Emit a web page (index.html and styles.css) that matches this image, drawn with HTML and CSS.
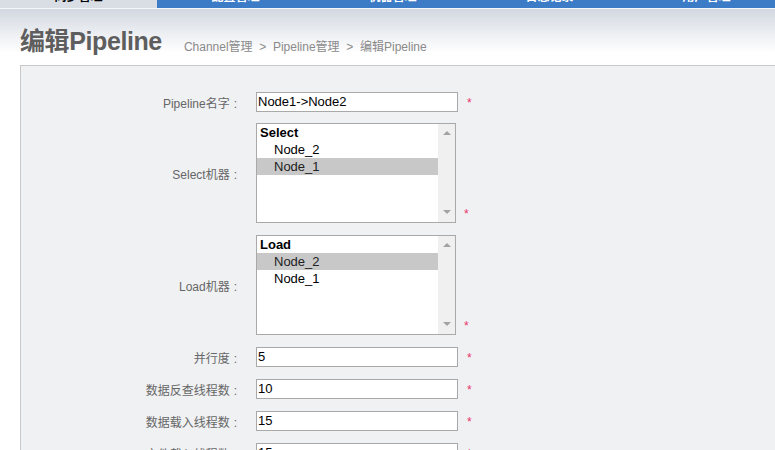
FILE: index.html
```html
<!DOCTYPE html>
<html lang="zh-CN">
<head>
<meta charset="utf-8">
<title>编辑Pipeline</title>
<link rel="stylesheet" href="styles.css">
</head>
<body>
<div class="topnav">
  <div class="tab active"><span>同步管理</span></div>
  <div class="tab"><span>配置管理</span></div>
  <div class="tab"><span>机器管理</span></div>
  <div class="tab"><span>日志记录</span></div>
  <div class="tab"><span>用户管理</span></div>
</div>
<div class="header">
  <h1 class="title">编辑Pipeline</h1>
  <div class="crumbs">Channel管理&nbsp; &gt; &nbsp;Pipeline管理&nbsp; &gt; &nbsp;编辑Pipeline</div>
</div>
<div class="panel">
  <div class="row first">
    <div class="label">Pipeline名字<span class="colon">:</span></div>
    <div class="field"><div class="input">Node1-&gt;Node2</div></div>
    <span class="star">*</span>
  </div>
  <div class="row">
    <div class="label">Select机器<span class="colon">:</span></div>
    <div class="field">
      <div class="listbox">
        <div class="opts">
          <div class="group">Select</div>
          <div class="opt">Node_2</div>
          <div class="opt sel">Node_1</div>
        </div>
        <div class="scroll"><span class="up"></span><span class="down"></span></div>
      </div>
    </div>
    <span class="star bottom">*</span>
  </div>
  <div class="row">
    <div class="label">Load机器<span class="colon">:</span></div>
    <div class="field">
      <div class="listbox">
        <div class="opts">
          <div class="group">Load</div>
          <div class="opt sel">Node_2</div>
          <div class="opt">Node_1</div>
        </div>
        <div class="scroll"><span class="up"></span><span class="down"></span></div>
      </div>
    </div>
    <span class="star bottom">*</span>
  </div>
  <div class="row">
    <div class="label">并行度<span class="colon">:</span></div>
    <div class="field"><div class="input">5</div></div>
    <span class="star">*</span>
  </div>
  <div class="row">
    <div class="label">数据反查线程数<span class="colon">:</span></div>
    <div class="field"><div class="input">10</div></div>
    <span class="star">*</span>
  </div>
  <div class="row">
    <div class="label">数据载入线程数<span class="colon">:</span></div>
    <div class="field"><div class="input">15</div></div>
    <span class="star">*</span>
  </div>
  <div class="row">
    <div class="label">文件载入线程数<span class="colon">:</span></div>
    <div class="field"><div class="input">15</div></div>
    <span class="star">*</span>
  </div>
</div>
</body>
</html>
```
FILE: styles.css
```css
html, body {
  margin: 0;
  padding: 0;
  background: #fff;
  font-family: "Liberation Sans", "Noto Sans CJK SC", sans-serif;
  overflow: hidden;
}
.topnav {
  display: flex;
  height: 8px;
  overflow: hidden;
  background: #3c7bc6;
}
.tab {
  flex: 0 0 157px;
  height: 8px;
  overflow: hidden;
  color: #fff;
  font-size: 12px;
  font-weight: bold;
  text-align: center;
}
.tab span {
  display: block;
  margin-top: -11px;
  line-height: 16px;
}
.tab.active {
  background: #d9dde4;
  color: #000;
}
.header {
  height: 56px;
  border-top: 1px solid #f4f6f9;
  background: linear-gradient(#d2d8e0 0%, #f3f4f7 55%, #ffffff 78%, #ffffff 100%);
  display: flex;
  align-items: flex-end;
  padding-left: 20px;
}
.title {
  margin: 0 0 9px 0;
  font-size: 25px;
  line-height: 30px;
  font-weight: bold;
  color: #5e5e5e;
  letter-spacing: -0.4px;
}
.crumbs {
  margin: 0 0 10px 22px;
  font-size: 12px;
  line-height: 16px;
  color: #8a8a8a;
}
.panel {
  margin-left: 20px;
  border-top: 1px solid #c9c9c9;
  border-left: 1px solid #c9c9c9;
  background: #f0f1f3;
  padding-top: 26px;
  height: 400px;
}
.row {
  display: flex;
  align-items: center;
  margin-bottom: 12px;
}
.row.first {
  margin-bottom: 11px;
}
.label {
  box-sizing: border-box;
  width: 219px;
  padding-right: 3px;
  text-align: right;
  font-size: 12px;
  color: #666;
  white-space: nowrap;
}
.colon {
  margin-left: 4px;
}
.field {
  margin-left: 16px;
}
.input {
  box-sizing: border-box;
  width: 202px;
  height: 20px;
  border: 1px solid #a9a9a9;
  background: #fff;
  padding: 0 1px;
  font-size: 13px;
  line-height: 18px;
  color: #000;
}
.star {
  margin-left: 9px;
  color: #ea336b;
  font-size: 12px;
  line-height: 12px;
  padding-top: 2px;
}
.star.bottom {
  align-self: flex-end;
  margin-left: 8px;
  margin-bottom: 3px;
}
.listbox {
  box-sizing: border-box;
  width: 200px;
  height: 100px;
  border: 1px solid #a9a9a9;
  background: #fff;
  display: flex;
}
.opts {
  flex: 1;
  font-size: 13px;
  color: #000;
}
.group {
  height: 17px;
  line-height: 17px;
  font-weight: bold;
  padding-left: 3px;
}
.opt {
  height: 17px;
  line-height: 17px;
  padding-left: 17px;
}
.opt.sel {
  background: #c8c8c8;
  color: #222;
}
.scroll {
  width: 17px;
  background: #f0f0f0;
  display: flex;
  flex-direction: column;
  justify-content: space-between;
  align-items: center;
  padding: 7px 0 8px;
}
.up {
  width: 0;
  height: 0;
  border-left: 4px solid transparent;
  border-right: 4px solid transparent;
  border-bottom: 4px solid #a3a3a3;
}
.down {
  width: 0;
  height: 0;
  border-left: 4px solid transparent;
  border-right: 4px solid transparent;
  border-top: 4px solid #a3a3a3;
}
```
